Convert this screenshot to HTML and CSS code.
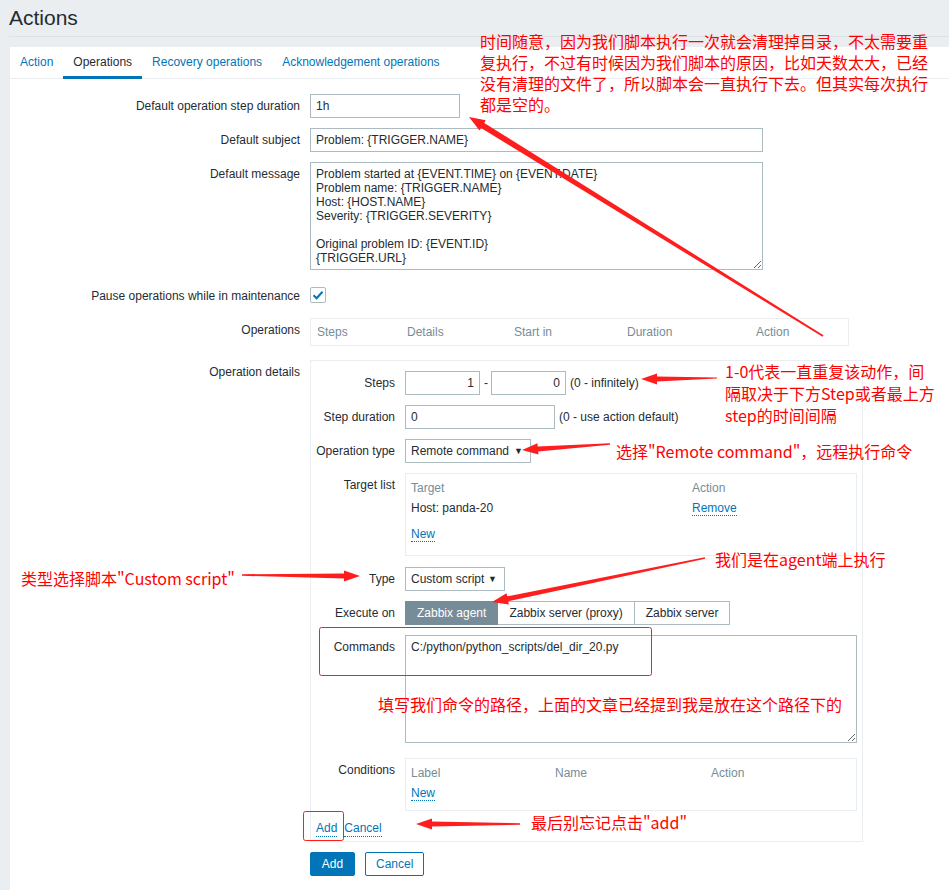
FILE: index.html
```html
<!DOCTYPE html>
<html lang="zh-CN">
<head>
<meta charset="utf-8">
<title>Actions</title>
<link rel="stylesheet" href="styles.css">
</head>
<body>
<div class="page">
  <header class="page-head"><h1>Actions</h1></header>
  <main class="card">
    <nav class="tabs">
      <a class="tab">Action</a>
      <a class="tab active">Operations</a>
      <a class="tab">Recovery operations</a>
      <a class="tab">Acknowledgement operations</a>
    </nav>
    <div class="form">
      <div class="row">
        <div class="lbl">Default operation step duration</div>
        <div class="ctl"><input class="inp w150" value="1h" readonly></div>
      </div>
      <div class="row">
        <div class="lbl">Default subject</div>
        <div class="ctl"><input class="inp w453" value="Problem: {TRIGGER.NAME}" readonly></div>
      </div>
      <div class="row">
        <div class="lbl">Default message</div>
        <div class="ctl"><textarea class="ta w453" readonly>Problem started at {EVENT.TIME} on {EVENT.DATE}
Problem name: {TRIGGER.NAME}
Host: {HOST.NAME}
Severity: {TRIGGER.SEVERITY}

Original problem ID: {EVENT.ID}
{TRIGGER.URL}</textarea></div>
      </div>
      <div class="row row-check">
        <div class="lbl">Pause operations while in maintenance</div>
        <div class="ctl"><span class="check"><svg width="12" height="10" viewBox="0 0 12 10"><path d="M1.5 5.2 L4.6 8.2 L10.5 1.8" fill="none" stroke="#0275b8" stroke-width="2"/></svg></span></div>
      </div>
      <div class="row row-ops">
        <div class="lbl">Operations</div>
        <div class="ctl">
          <div class="ops-table">
            <span class="c1">Steps</span><span class="c2">Details</span><span class="c3">Start in</span><span class="c4">Duration</span><span class="c5">Action</span>
          </div>
        </div>
      </div>
      <div class="row row-details">
        <div class="lbl">Operation details</div>
        <div class="ctl">
          <div class="details">
            <div class="irow">
              <div class="lbl">Steps</div>
              <div class="ictl"><input class="inp w75 num" value="1" readonly><span class="dash">-</span><input class="inp w75 num" value="0" readonly><span class="hint">(0 - infinitely)</span></div>
            </div>
            <div class="irow">
              <div class="lbl">Step duration</div>
              <div class="ictl"><input class="inp w150" value="0" readonly><span class="hint">(0 - use action default)</span></div>
            </div>
            <div class="irow">
              <div class="lbl">Operation type</div>
              <div class="ictl"><div class="sel w126"><span>Remote command</span><span class="caret">▼</span></div></div>
            </div>
            <div class="irow">
              <div class="lbl">Target list</div>
              <div class="ictl">
                <div class="sub target">
                  <div class="subgrid g-target">
                    <span class="th">Target</span><span class="th">Action</span>
                    <span>Host: panda-20</span><span><a class="lnk">Remove</a></span>
                  </div>
                  <div class="newline"><a class="lnk">New</a></div>
                </div>
              </div>
            </div>
            <div class="irow row-type">
              <div class="lbl">Type</div>
              <div class="ictl"><div class="sel w100"><span>Custom script</span><span class="caret">▼</span></div></div>
            </div>
            <div class="irow">
              <div class="lbl">Execute on</div>
              <div class="ictl">
                <div class="seg">
                  <span class="seg-btn on">Zabbix agent</span><span class="seg-btn">Zabbix server (proxy)</span><span class="seg-btn">Zabbix server</span>
                </div>
              </div>
            </div>
            <div class="irow">
              <div class="lbl">Commands</div>
              <div class="ictl"><textarea class="ta w452" readonly>C:/python/python_scripts/del_dir_20.py</textarea></div>
            </div>
            <div class="irow row-cond">
              <div class="lbl">Conditions</div>
              <div class="ictl">
                <div class="sub cond">
                  <div class="subgrid g-cond">
                    <span class="th">Label</span><span class="th">Name</span><span class="th">Action</span>
                  </div>
                  <div class="newline2"><a class="lnk">New</a></div>
                </div>
              </div>
            </div>
            <div class="links"><a class="lnk">Add</a><a class="lnk">Cancel</a></div>
          </div>
        </div>
      </div>
      <div class="row row-buttons">
        <div></div>
        <div class="ctl btns"><button class="btn primary">Add</button><button class="btn">Cancel</button></div>
      </div>
    </div>
  </main>

  <div class="note note-top">时间随意，因为我们脚本执行一次就会清理掉目录，不太需要重<br>复执行，不过有时候因为我们脚本的原因，比如天数太大，已经<br>没有清理的文件了，所以脚本会一直执行下去。但其实每次执行<br>都是空的。</div>
  <div class="note note-steps">1-0代表一直重复该动作，间<br>隔取决于下方Step或者最上方<br>step的时间间隔</div>
  <div class="note note-optype">选择"Remote command"，远程执行命令</div>
  <div class="note note-type">类型选择脚本"Custom script"</div>
  <div class="note note-agent">我们是在agent端上执行</div>
  <div class="note note-cmd">填写我们命令的路径，上面的文章已经提到我是放在这个路径下的</div>
  <div class="note note-add">最后别忘记点击"add"</div>

  <svg class="overlay" width="949" height="890" viewBox="0 0 949 890">
    <g fill="#ff1e1e">
      <polygon points="823.5,335.2 484.2,122.9 485.7,120.2 469,117 479.5,130.6 481.1,128 822.5,336.8"/>
      <polygon points="717,377.4 657,376.6 657,373.5 641,379 657,384.5 657,381.4 717,378.6"/>
      <polygon points="610,444.7 538.2,451.4 538.4,454.6 522,450 537.5,443.2 537.7,446.4 610,443.3"/>
      <polygon points="242,574.2 344,573.6 344,570.5 360,576 344,581.5 344,578.4 242,575.8"/>
      <polygon points="705.2,558.7 508.2,601.2 508.8,604.4 492,602 506.5,593.2 507.2,596.3 704.8,557.3"/>
      <polygon points="520,823.2 432,821.6 432,818.5 416,824 432,829.5 432,826.4 520,824.8"/>
    </g>
    <g fill="none" stroke="#ff1e1e" stroke-width="1">
      <rect x="319.5" y="627.5" width="332" height="48" rx="2"/>
      <rect x="303.5" y="811.5" width="40" height="29" rx="2"/>
    </g>
  </svg>
</div>
</body>
</html>
```
FILE: styles.css
```css
* { box-sizing: border-box; }
html, body { margin: 0; padding: 0; }
body {
  background: #ebeef0;
  font-family: "Liberation Sans", Arial, sans-serif;
  font-size: 12px;
  color: #1f2c33;
}
.page {
  position: relative;
  width: 949px;
  min-height: 890px;
  overflow: hidden;
}
.page-head {
  height: 37px;
  margin-left: 9px;
  border-bottom: 1px solid #dde2e5;
}
.page-head h1 {
  margin: 0;
  font-weight: normal;
  font-size: 21px;
  line-height: 36px;
  color: #1f2c33;
}
.card {
  margin: 10px 0 0 10px;
  background: #fff;
  min-height: 843px;
}
.tabs {
  display: flex;
  height: 32px;
  border-bottom: 1px solid #ebeef0;
}
.tab {
  padding: 2px 10px 0;
  line-height: 27px;
  height: 32px;
  border-bottom: 3px solid transparent;
  color: #0275b8;
}
.tab.active {
  color: #1f2c33;
  border-bottom-color: #0275b8;
}
.form { padding-top: 15px; }
.row {
  display: grid;
  grid-template-columns: 290px auto;
  column-gap: 10px;
  margin-top: 10px;
}
.row:first-child { margin-top: 0; }
.lbl {
  text-align: right;
  padding-top: 5px;
  line-height: 14px;
  white-space: nowrap;
}
.ctl { display: flex; align-items: flex-start; }
.inp {
  height: 24px;
  border: 1px solid #acbbc2;
  padding: 0 5px;
  font: inherit;
  color: #1f2c33;
  background: #fff;
  outline: none;
}
.num { text-align: right; }
.w75 { width: 75px; }
.w150 { width: 150px; }
.w453 { width: 453px; }
.w452 { width: 452px; }
.w126 { width: 126px; }
.w100 { width: 100px; }
.ta {
  display: block;
  height: 108px;
  border: 1px solid #acbbc2;
  padding: 4px 5px;
  font: inherit;
  line-height: 14px;
  color: #1f2c33;
  background: #fff;
  outline: none;
}
.row-check { margin-top: 13px; height: 24px; }
.row-check .lbl { padding-top: 6px; }
.check {
  margin-top: 4px;
  width: 16px;
  height: 16px;
  border: 1px solid #acbbc2;
  border-radius: 2px;
  display: flex;
  align-items: center;
  justify-content: center;
}
.row-ops { margin-top: 11px; }
.ops-table {
  width: 539px;
  height: 28px;
  border: 1px solid #ebeef0;
  display: flex;
  color: #768d99;
  line-height: 26px;
}
.ops-table span { padding-left: 6px; }
.ops-table .c1 { width: 90px; }
.ops-table .c2 { width: 107px; }
.ops-table .c3 { width: 113px; }
.ops-table .c4 { width: 129px; }
.row-details { margin-top: 14px; }
.details {
  width: 553px;
  border: 1px solid #ebeef0;
  padding: 10px 5px 4px 0;
}
.irow {
  display: grid;
  grid-template-columns: 84px auto;
  column-gap: 10px;
  margin-bottom: 10px;
}
.ictl { display: flex; align-items: flex-start; }
.dash { margin: 0 3px 0 4px; line-height: 24px; }
.hint { margin-left: 4px; line-height: 24px; white-space: nowrap; }
.sel {
  height: 24px;
  border: 1px solid #acbbc2;
  display: flex;
  align-items: center;
  justify-content: space-between;
  padding: 0 7px 0 5px;
}
.caret { font-size: 9px; }
.sub {
  width: 452px;
  border: 1px solid #ebeef0;
  padding: 6px 5px;
}
.target { height: 83px; }
.cond { height: 53px; }
.subgrid { display: grid; line-height: 16px; row-gap: 4px; }
.g-target { grid-template-columns: 281px auto; }
.g-cond { grid-template-columns: 144px 156px auto; }
.th { color: #768d99; }
.lnk {
  color: #0275b8;
  border-bottom: 1px dotted #0275b8;
  text-decoration: none;
}
.newline { margin-top: 10px; line-height: 16px; }
.newline2 { margin-top: 4px; line-height: 16px; }
.row-type { margin-top: 11px; }
.seg { display: flex; }
.seg-btn {
  height: 24px;
  line-height: 22px;
  border: 1px solid #acbbc2;
  padding: 0 11px;
  white-space: nowrap;
}
.seg-btn + .seg-btn { border-left: 0; }
.seg-btn.on {
  background: #768d99;
  border-color: #768d99;
  color: #fff;
}
.row-cond { margin-top: 15px; }
.links {
  display: flex;
  gap: 7px;
  padding-left: 5px;
  line-height: 14px;
  margin-top: 1px;
  height: 16px;
}
.row-buttons { margin-top: 10px; }
.btns { gap: 10px; }
.btn {
  height: 24px;
  padding: 0 10px;
  font: inherit;
  border: 1px solid #0275b8;
  border-radius: 2px;
  background: #fff;
  color: #0275b8;
}
.btn.primary {
  background: #0275b8;
  color: #fff;
  width: 45px;
}

.note {
  position: absolute;
  color: #ff0000;
  font-family: "Noto Sans CJK SC", "Microsoft YaHei", sans-serif;
  font-size: 16px;
  line-height: 21px;
  white-space: nowrap;
}
.note-top { left: 480px; top: 31px; }
.note-steps { left: 725px; top: 360px; line-height: 22px; }
.note-optype { left: 616px; top: 441px; }
.note-type { left: 21px; top: 568px; }
.note-agent { left: 715px; top: 549px; }
.note-cmd { left: 378px; top: 694px; }
.note-add { left: 531px; top: 812px; }
.overlay {
  position: absolute;
  left: 0;
  top: 0;
  pointer-events: none;
}
```
